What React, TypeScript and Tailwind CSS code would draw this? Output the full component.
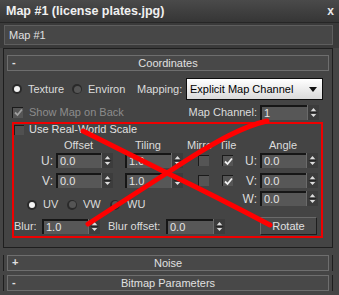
import React from 'react'

function Arrows() {
  return (
    <div className="w-[12px] h-full bg-[#3c3c3c] border-l border-[#6a6a6a] flex items-center justify-center">
      <svg width="12" height="15" viewBox="0 0 12 15">
        <path d="M3 6 L6 2.5 L9 6 Z" fill="#dcdcdc" />
        <line x1="2" y1="7.5" x2="10" y2="7.5" stroke="#222" strokeWidth="1" />
        <path d="M3 9 L9 9 L6 12.5 Z" fill="#dcdcdc" />
      </svg>
    </div>
  )
}

function Spinner({ value, input }: { value: string; input: string }) {
  return (
    <div className="flex h-[15px] bg-[#2a2a2a]">
      <div
        className={`${input} h-full bg-[#575757] border-t-2 border-l-2 border-[#161616] flex items-center pl-[2px] text-[11px] leading-none text-[#e4e4e4]`}
      >
        {value}
      </div>
      <Arrows />
    </div>
  )
}

function Check({ on, dim }: { on?: boolean; dim?: boolean }) {
  return (
    <div className="w-[11px] h-[11px] bg-[#555555] border-t border-l border-[#1a1a1a] flex items-center justify-center shrink-0">
      {on && (
        <svg width="9" height="9" viewBox="0 0 9 9">
          <path d="M1 4.5 L3.5 7 L8 1.5" fill="none" stroke={dim ? '#a0a0a0' : '#f2f2f2'} strokeWidth="1.8" />
        </svg>
      )}
    </div>
  )
}

function Radio({ on }: { on?: boolean }) {
  return (
    <div className="w-[10px] h-[10px] rounded-full bg-[#2a2a2a] flex items-center justify-center shrink-0">
      <div className={on ? 'w-[6px] h-[6px] rounded-full bg-[#f4f4f4]' : 'w-[7px] h-[7px] rounded-full bg-[#555555]'} />
    </div>
  )
}

function Rollout({ sign, title }: { sign: string; title: string }) {
  return (
    <div className="relative h-[16px] bg-[#484848] border border-[#6e6e6e] flex items-center justify-center text-[11px] text-[#e0e0e0]">
      <span className="absolute left-[4px] top-[1px] font-bold">{sign}</span>
      {title}
    </div>
  )
}

export default function App() {
  return (
    <div className="relative w-[339px] h-[295px] overflow-hidden bg-[#454545] font-['Liberation_Sans',Arial,sans-serif] text-[#dcdcdc] text-[11px] leading-none">
      {/* title bar */}
      <div className="h-[23px] flex items-center justify-between pl-[6px] pr-[5px] bg-gradient-to-b from-[#4a4a4a] to-[#363636] border-b border-[#262626]">
        <span className="text-[12.5px] font-bold text-[#f0f0f0]">Map #1 (license plates.jpg)</span>
        <span className="text-[12px] font-bold text-[#e8e8e8]">x</span>
      </div>

      {/* name field */}
      <div className="h-[25px] bg-[#3a3a3a] px-[4px] pt-[2px]">
        <div className="h-[20px] w-[329px] bg-[#474747] border border-[#5e5e5e] flex items-center pl-[4px] text-[11px] text-[#e0e0e0]">
          Map #1
        </div>
      </div>

      {/* coordinates frame */}
      <div className="mx-[3px] w-[330px] h-[200px] border border-[#1e1e1e] bg-[#444444] pt-[6px] px-[3px]">
        <div className="w-[322px]">
          <Rollout sign="-" title="Coordinates" />
        </div>

        <div className="mt-[7px] h-[22px] flex items-center pl-[5px]">
          <Radio on />
          <span className="ml-[6px] w-[44px]">Texture</span>
          <Radio />
          <span className="ml-[6px] w-[49px]">Environ</span>
          <span className="w-[49px]">Mapping:</span>
          <div className="w-[137px] h-[22px] bg-gradient-to-b from-[#ffffff] to-[#dadada] border border-[#0d0d0d] flex items-center justify-between pl-[3px] pr-[5px] text-black text-[11px]">
            <span>Explicit Map Channel</span>
            <svg width="8" height="5" viewBox="0 0 8 5">
              <path d="M0 0 L8 0 L4 5 Z" fill="#111" />
            </svg>
          </div>
        </div>

        <div className="mt-[3px] h-[18px] flex items-center pl-[5px] pr-[10px]">
          <Check on dim />
          <span className="ml-[6px] text-[#8c8c8c]">Show Map on Back</span>
          <span className="ml-auto mr-[3px]">Map Channel:</span>
          <Spinner value="1" input="w-[47px]" />
        </div>

        {/* red box */}
        <div className="mt-[1px] ml-[5px] w-[311px] h-[116px] border-2 border-[#ee0000]">
          <div className="h-[11px] flex items-center">
            <div className="w-[10px] h-[10px] bg-[#505050] border-t border-l border-[#1a1a1a]" />
            <span className="ml-[5px] text-[#e0e0e0]">Use Real-World Scale</span>
          </div>

          <div className="mt-[4px] h-[12px] flex items-center text-[11px]">
            <div className="w-[42px]" />
            <div className="w-[45px] text-center">Offset</div>
            <div className="w-[24px]" />
            <div className="w-[46px] text-center">Tiling</div>
            <div className="w-[16px]" />
            <div className="w-[29px] whitespace-nowrap">Mirro</div>
            <div className="w-[3px]" />
            <div className="w-[14px]">Tile</div>
            <div className="w-[27px]" />
            <div className="w-[46px] text-center">Angle</div>
          </div>

          {[
            ['U:', '0.0', '1.0', 'U:'],
            ['V:', '0.0', '1.0', 'V:'],
          ].map((r, i) => (
            <div key={i} className={`${i === 0 ? 'mt-[2px]' : 'mt-[5px]'} h-[15px] flex items-center`}>
              <div className="w-[42px] text-right pr-[3px] text-[12px]">{r[0]}</div>
              <Spinner value={r[1]} input="w-[45px]" />
              <div className="w-[12px]" />
              <Spinner value={r[2]} input="w-[46px]" />
              <div className="w-[15px]" />
              <Check />
              <div className="w-[13px]" />
              <Check on />
              <div className="w-[27px] text-right pr-[3px] text-[12px]">{r[3]}</div>
              <Spinner value="0.0" input="w-[46px]" />
            </div>
          ))}

          <div className="mt-[3px] h-[18px] flex items-start">
            <div className="mt-[8px] ml-[13px] flex items-center">
              <Radio on />
              <span className="ml-[6px] w-[24px]">UV</span>
              <Radio />
              <span className="ml-[6px] w-[27px]">VW</span>
              <Radio />
              <span className="ml-[7px]">WU</span>
            </div>
            <div className="ml-auto mr-[3px] flex items-center">
              <div className="w-[27px] text-right pr-[3px] text-[12px]">W:</div>
              <Spinner value="0.0" input="w-[46px]" />
            </div>
          </div>

          <div className="mt-[8px] h-[18px] flex items-center">
            <span className="w-[28px] text-[11px]">Blur:</span>
            <Spinner value="1.0" input="w-[46px]" />
            <span className="ml-[8px] w-[58px]">Blur offset:</span>
            <Spinner value="0.0" input="w-[47px]" />
            <div className="ml-auto mr-[4px] w-[57px] h-[18px] bg-[#4a4a4a] border border-t-[#6a6a6a] border-l-[#6a6a6a] border-b-[#1e1e1e] border-r-[#1e1e1e] flex items-center justify-center text-[#e0e0e0]">
              Rotate
            </div>
          </div>
        </div>
      </div>

      {/* other rollouts */}
      <div className="mt-[7px] mx-[3px] w-[330px] border-x border-[#1e1e1e] px-[3px]">
        <div className="w-[322px]">
          <Rollout sign="+" title="Noise" />
        </div>
      </div>
      <div className="mt-[4px] mx-[3px] w-[330px] border-x border-[#1e1e1e] px-[3px]">
        <div className="w-[322px]">
          <Rollout sign="-" title="Bitmap Parameters" />
        </div>
      </div>

      {/* red X annotation */}
      <svg className="absolute left-0 top-0 pointer-events-none" width="339" height="295" viewBox="0 0 339 295">
        <path d="M83 131 L165 172 Q215 196 270 225" fill="none" stroke="#ff0000" strokeWidth="5" strokeLinecap="round" />
        <path d="M267 121 C245 126 220 138 170 171 L88 224" fill="none" stroke="#ff0000" strokeWidth="5" strokeLinecap="round" />
      </svg>
    </div>
  )
}
